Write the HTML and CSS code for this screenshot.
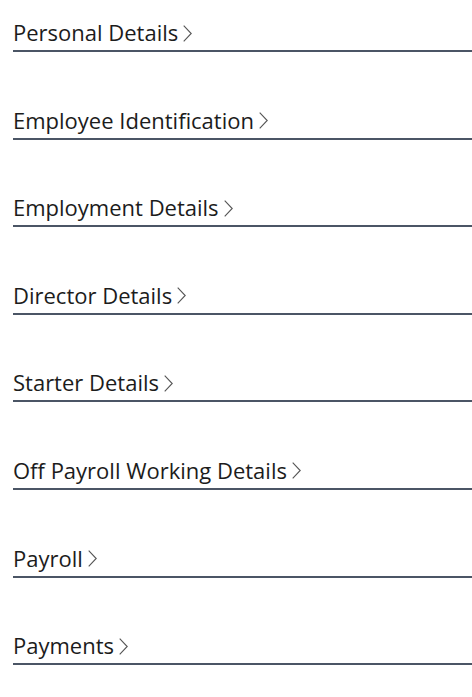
FILE: index.html
```html
<!DOCTYPE html>
<html lang="en">
<head>
  <meta charset="UTF-8">
  <meta name="viewport" content="width=device-width, initial-scale=1">
  <title>Employee Record</title>
  <link rel="stylesheet" href="styles.css">
</head>
<body>

  <div class="sections">
    <div class="section-title">Personal Details <svg class="chevron" viewBox="0 0 9 17"><polyline points="0.7,0.7 8.2,8.5 0.7,16.3" /></svg></div>
    <div class="section-title">Employee Identification <svg class="chevron" viewBox="0 0 9 17"><polyline points="0.7,0.7 8.2,8.5 0.7,16.3" /></svg></div>
    <div class="section-title">Employment Details <svg class="chevron" viewBox="0 0 9 17"><polyline points="0.7,0.7 8.2,8.5 0.7,16.3" /></svg></div>
    <div class="section-title">Director Details <svg class="chevron" viewBox="0 0 9 17"><polyline points="0.7,0.7 8.2,8.5 0.7,16.3" /></svg></div>
    <div class="section-title">Starter Details <svg class="chevron" viewBox="0 0 9 17"><polyline points="0.7,0.7 8.2,8.5 0.7,16.3" /></svg></div>
    <div class="section-title">Off Payroll Working Details <svg class="chevron" viewBox="0 0 9 17"><polyline points="0.7,0.7 8.2,8.5 0.7,16.3" /></svg></div>
    <div class="section-title">Payroll <svg class="chevron" viewBox="0 0 9 17"><polyline points="0.7,0.7 8.2,8.5 0.7,16.3" /></svg></div>
    <div class="section-title">Payments <svg class="chevron" viewBox="0 0 9 17"><polyline points="0.7,0.7 8.2,8.5 0.7,16.3" /></svg></div>
  </div>

</body>
</html>
```

FILE: styles.css
```css
/* Basic Reset */
* {
  box-sizing: border-box;
  margin: 0;
  padding: 0;
}

body {
  font-family: "Open Sans", "Noto Sans", sans-serif;
  background-color: #fff;
  color: #1c1c1c;
  padding: 18px 0 0 13px;
  overflow: hidden;
}

.sections {
  display: flex;
  flex-direction: column;
  gap: 53.6px;
}

.section-title {
  display: flex;
  align-items: center;
  gap: 5px;
  font-size: 22px;
  line-height: 28px;
  padding-bottom: 4px;
  border-bottom: 2px solid #4b5565;
}

.chevron {
  width: 9px;
  height: 17px;
  margin-top: 2px;
  fill: none;
  stroke: #555;
  stroke-width: 1.1;
}
```
